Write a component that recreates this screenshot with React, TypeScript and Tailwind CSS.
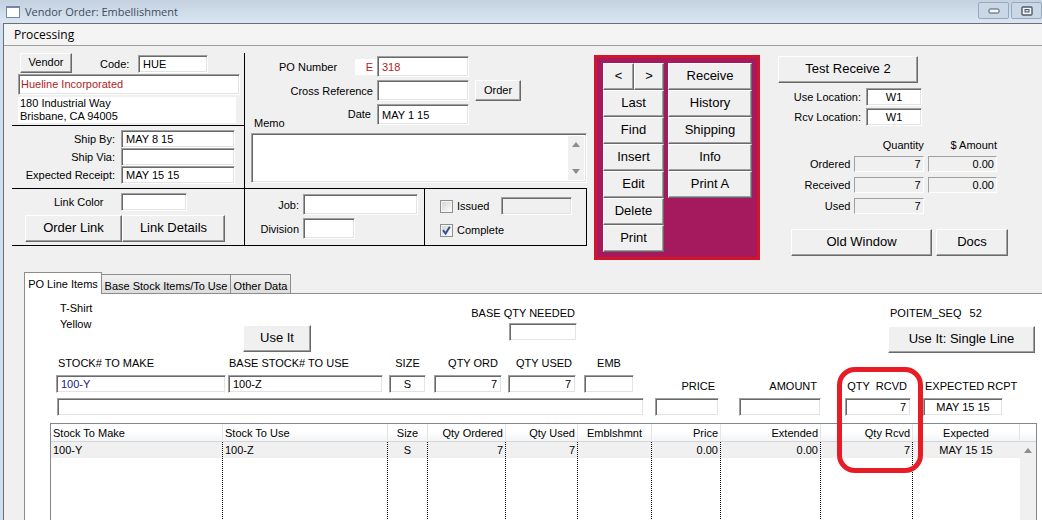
import React from "react";

const SUNKEN =
  "border border-t-[#a0a0a0] border-l-[#a0a0a0] border-r-white border-b-white bg-white px-1 text-[11px] outline-none shadow-[inset_1px_1px_0_#696969,inset_-1px_-1px_0_#e3e3e3]";
const FLAT =
  "h-4 border border-t-[#a0a0a0] border-l-[#a0a0a0] border-r-white border-b-white bg-[#f0f0f0] px-0.5 text-right text-[11px] outline-none";
const RAISED =
  "flex shrink-0 items-center justify-center border border-t-white border-l-white border-r-[#696969] border-b-[#696969] bg-[#f0f0f0] pb-0.5 whitespace-nowrap shadow-[inset_-1px_-1px_0_#a0a0a0]";
const DOTTED =
  "bg-[linear-gradient(to_bottom,#000_50%,transparent_50%)] bg-[length:1px_2px] bg-right-top bg-repeat-y nth-10:bg-none";

function Field({
  label,
  value = "",
  className = "",
  id,
}: {
  label?: string;
  value?: string;
  className?: string;
  id?: string;
}) {
  return (
    <input
      id={id}
      aria-label={id ? undefined : label}
      defaultValue={value}
      className={`${SUNKEN} ${className}`}
    />
  );
}

function Btn({ children, className = "" }: { children: React.ReactNode; className?: string }) {
  return (
    <button type="button" className={`${RAISED} ${className}`}>
      {children}
    </button>
  );
}

function Arrow({ down = false }: { down?: boolean }) {
  return (
    <svg width="8" height="5" viewBox="0 0 8 5" aria-hidden="true">
      <path d={down ? "M0 0H8L4 5Z" : "M0 5H8L4 0Z"} fill="#8c8c8c" />
    </svg>
  );
}

function VendorBlock() {
  return (
    <div className="flex w-[233px] flex-col border-r border-black">
      <div className="flex h-[73px] flex-col border-b border-black pr-1 pl-1.5">
        <div className="flex h-[21px] items-start">
          <Btn className="ml-0.5 h-5 w-[52px] text-[11px]">Vendor</Btn>
          <label htmlFor="code" className="ml-7 w-[38px] pt-1">
            Code:
          </label>
          <Field id="code" value="HUE" className="mt-0.5 h-[18px] w-[70px]" />
        </div>
        <Field label="Vendor name" value="Hueline Incorporated" className="h-[21px] w-full pb-0.5 pl-0.5 text-[#b01c24]" />
        <div className="mt-0.5 mr-1 bg-white pl-0.5 leading-[13px]">
          <p>180 Industrial Way</p>
          <p>Brisbane, CA 94005</p>
        </div>
      </div>
      <div className="grid grid-cols-[103px_114px] items-center gap-x-1.5 pt-1">
        <label htmlFor="shipby" className="text-right">Ship By:</label>
        <Field id="shipby" value="MAY 8 15" className="h-[18px]" />
        <label htmlFor="shipvia" className="text-right">Ship Via:</label>
        <Field id="shipvia" className="h-[18px]" />
        <label htmlFor="receipt" className="text-right">Expected Receipt:</label>
        <Field id="receipt" value="MAY 15 15" className="h-[18px]" />
      </div>
    </div>
  );
}

function OrderBlock() {
  return (
    <div className="flex w-[342px] flex-col pt-[3px]">
      <div className="flex flex-col gap-[3px]">
        <div className="flex h-[21px] items-center">
          <label htmlFor="po" className="w-[110px] pl-[34px]">PO Number</label>
          <span className="w-[22px] bg-white pr-1 text-right leading-4 text-[#b01c24]">E</span>
          <Field id="po" value="318" className="h-[21px] w-[92px] text-[#b01c24]" />
        </div>
        <div className="flex h-[21px] items-center">
          <label htmlFor="xref" className="w-[132px] pr-1 text-right">Cross Reference</label>
          <Field id="xref" className="h-[21px] w-[92px]" />
          <Btn className="ml-1.5 h-[21px] w-[46px] text-[11px]">Order</Btn>
        </div>
        <div className="flex h-[29px] items-start">
          <label htmlFor="memo" className="self-end pb-1 pl-[9px] leading-3">Memo</label>
          <label htmlFor="date" className="ml-auto pt-1 pr-1.5 leading-3">Date</label>
          <Field id="date" value="MAY 1 15" className="mr-[118px] h-[21px] w-[92px]" />
        </div>
      </div>
      <div className={`ml-1.5 flex h-[50px] ${SUNKEN} !p-[2px]`}>
        <textarea id="memo" className="min-w-0 flex-1 resize-none outline-none" />
        <div className="flex w-4 flex-col items-center justify-between bg-[#f0f0f0] py-1.5">
          <Arrow />
          <Arrow down />
        </div>
      </div>
    </div>
  );
}

function LinkRow() {
  return (
    <div className="flex h-[58px] border-y border-r border-black">
      <div className="w-[233px] border-r border-black pt-1">
        <div className="flex items-center">
          <label htmlFor="linkcolor" className="w-[109px] pl-[42px]">Link Color</label>
          <Field id="linkcolor" className="h-[18px] w-[66px]" />
        </div>
        <div className="mt-1 flex pl-[13px] text-[13px]">
          <Btn className="h-[27px] w-[97px]">Order Link</Btn>
          <Btn className="h-[27px] w-[103px]">Link Details</Btn>
        </div>
      </div>
      <div className="w-[180px] border-r border-black pt-[5px]">
        <div className="grid grid-cols-[54px_1fr] items-center gap-x-1 gap-y-[3px] pr-1.5">
          <label htmlFor="job" className="text-right">Job:</label>
          <Field id="job" className="h-[21px] w-full" />
          <label htmlFor="division" className="text-right">Division</label>
          <Field id="division" className="h-[21px] w-[52px]" />
        </div>
      </div>
      <div className="flex flex-col gap-1.5 pt-2 pl-[15px]">
        <div className="flex h-[18px] items-center">
          <Check label="Issued" />
          <input aria-label="Issued on" disabled className={`${SUNKEN} ml-auto h-[18px] w-[71px] !bg-[#f0f0f0]`} />
        </div>
        <div className="flex h-[18px] w-[132px] items-center">
          <Check label="Complete" checked />
        </div>
      </div>
    </div>
  );
}

function Check({ label, checked = false }: { label: string; checked?: boolean }) {
  return (
    <label className="flex items-center gap-1">
      <span className="grid size-[13px] place-items-center">
        <input
          type="checkbox"
          defaultChecked={checked}
          className="peer col-start-1 row-start-1 size-[13px] appearance-none border border-[#8e8f8f] bg-linear-to-br from-[#cfd3d8] to-white shadow-[inset_0_0_0_1px_#f4f4f4]"
        />
        <svg
          viewBox="0 0 13 13"
          className="pointer-events-none col-start-1 row-start-1 hidden size-[13px] peer-checked:block"
          aria-hidden="true"
        >
          <path d="M3 6.2L5.6 9.6L9.8 2.8" fill="none" stroke="#34508c" strokeWidth="2" />
        </svg>
      </span>
      {label}
    </label>
  );
}

function ActionPanel() {
  return (
    <div className="ml-[7px] flex shrink-0 items-start gap-1 self-start border-[3px] border-[#d3152b] bg-[#a5195f] py-[5px] pr-[5px] pl-1.5 text-[13px]">
      <div className="flex w-[61px] flex-col">
        <div className="flex">
          <Btn className="h-[27px] w-[31px]">&lt;</Btn>
          <Btn className="h-[27px] w-[30px]">&gt;</Btn>
        </div>
        {["Last", "Find", "Insert", "Edit", "Delete", "Print"].map((t) => (
          <Btn key={t} className="h-[27px]">{t}</Btn>
        ))}
      </div>
      <div className="flex w-[84px] flex-col">
        {["Receive", "History", "Shipping", "Info", "Print A"].map((t) => (
          <Btn key={t} className="h-[27px]">{t}</Btn>
        ))}
      </div>
    </div>
  );
}

function Totals() {
  return (
    <div className="ml-[18px] flex flex-col pt-px">
      <Btn className="h-[27px] w-[140px] text-[13px]">Test Receive 2</Btn>
      <div className="mt-[5px] grid grid-cols-[83px_56px] items-center gap-x-[5px] gap-y-0.5">
        <label htmlFor="useloc" className="text-right">Use Location:</label>
        <Field id="useloc" value="W1" className="h-[18px] text-center" />
        <label htmlFor="rcvloc" className="text-right">Rcv Location:</label>
        <Field id="rcvloc" value="W1" className="h-[18px] text-center" />
      </div>
      <table className="mt-2.5 -ml-1 w-[227px] border-separate border-spacing-x-1 border-spacing-y-0">
        <thead>
          <tr className="h-[17px] text-right">
            <td className="w-[73px]" />
            <th className="w-[70px] font-normal">Quantity</th>
            <th className="w-[70px] font-normal">$ Amount</th>
          </tr>
        </thead>
        <tbody>
          {[
            ["Ordered", "7", "0.00"],
            ["Received", "7", "0.00"],
            ["Used", "7", ""],
          ].map(([name, qty, amount]) => (
            <tr key={name} className="h-[21px]">
              <th className="text-right font-normal">{name}</th>
              <td>
                <input readOnly aria-label={`${name} quantity`} value={qty} className={`${FLAT} block w-full`} />
              </td>
              <td>
                {amount && (
                  <input readOnly aria-label={`${name} amount`} value={amount} className={`${FLAT} block w-full`} />
                )}
              </td>
            </tr>
          ))}
        </tbody>
      </table>
      <div className="mt-[13px] flex gap-1 pl-[13px] text-[13px]">
        <Btn className="h-[27px] w-[141px]">Old Window</Btn>
        <Btn className="h-[27px] w-[72px]">Docs</Btn>
      </div>
    </div>
  );
}

function Column({
  label,
  value,
  className,
  labelClass = "",
  inputClass = "",
  children,
}: {
  label: string;
  value?: string;
  className: string;
  labelClass?: string;
  inputClass?: string;
  children?: React.ReactNode;
}) {
  return (
    <div className={`relative flex shrink-0 flex-col gap-1 ${className}`}>
      <label className="flex flex-col gap-1">
        <span className={`leading-4 whitespace-pre ${labelClass}`}>{label}</span>
        <Field value={value} label={label} className={`h-[18px] w-full ${inputClass}`} />
      </label>
      {children}
    </div>
  );
}

function LineForm() {
  return (
    <div className="flex items-end pl-[31px]">
      <div className="flex w-[588px] shrink-0 flex-col gap-[5px]">
        <div className="flex">
          <Column label="STOCK# TO MAKE" value="100-Y" className="w-[170px]" labelClass="pl-0.5" inputClass="text-[#1a1a7c]" />
          <Column label="BASE STOCK# TO USE" value="100-Z" className="ml-0.5 w-[155px]" labelClass="pl-px" />
          <Column label="SIZE" value="S" className="ml-1.5 w-[37px]" labelClass="text-center" inputClass="text-center" />
          <Column label="QTY ORD" value="7" className="ml-2 w-[68px]" labelClass="pr-1 text-right" inputClass="text-right" />
          <Column label="QTY USED" value="7" className="ml-1.5 w-[68px]" labelClass="pr-1 text-right" inputClass="text-right" />
          <Column label="EMB" className="ml-2 w-[50px]" labelClass="text-center" />
        </div>
        <Field label="Description" className="ml-px h-[18px]" />
      </div>
      <Column label="PRICE" className="ml-[11px] w-16" labelClass="pr-1 text-right" />
      <Column label="AMOUNT" className="ml-5 w-[82px]" labelClass="pr-1 text-right" />
      <Column label="QTY  RCVD" value="7" className="ml-6 w-[66px]" labelClass="pr-1 text-right" inputClass="text-right">
        <div className="pointer-events-none absolute -top-[11px] -left-2 z-10 h-[106px] w-[86px] rounded-[18px] border-5 border-[#e81c24]" />
      </Column>
      <Column label="EXPECTED RCPT" value="MAY 15 15" className="ml-3 w-[80px]" labelClass="pl-0.5" inputClass="text-center" />
    </div>
  );
}

const COLUMNS: { title: string; value: string; width: string; align: string }[] = [
  { title: "Stock To Make", value: "100-Y", width: "w-[172px]", align: "text-left" },
  { title: "Stock To Use", value: "100-Z", width: "w-[165px]", align: "text-left" },
  { title: "Size", value: "S", width: "w-[40px]", align: "text-center" },
  { title: "Qty Ordered", value: "7", width: "w-[78px]", align: "text-right" },
  { title: "Qty Used", value: "7", width: "w-[72px]", align: "text-right" },
  { title: "Emblshmnt", value: "", width: "w-[74px]", align: "text-center" },
  { title: "Price", value: "0.00", width: "w-[69px]", align: "text-right" },
  { title: "Extended", value: "0.00", width: "w-[100px]", align: "text-right" },
  { title: "Qty Rcvd", value: "7", width: "w-[92px]", align: "text-right" },
  { title: "Expected", value: "MAY 15 15", width: "w-auto", align: "text-center" },
];

function LineTable() {
  return (
    <div className="mt-[7px] mr-[5px] ml-[25px] border border-b-0 border-[#828790]">
      <table className="w-full table-fixed border-separate border-spacing-0">
        <thead>
          <tr className="h-[18px] bg-linear-to-b from-white from-40% to-[#f1f3f5]">
            {COLUMNS.map((c) => (
              <th
                key={c.title}
                className={`border-r border-b border-r-[#e4e6e8] border-b-[#d5d5d5] px-0.5 font-normal ${c.width} ${c.align}`}
              >
                {c.title}
              </th>
            ))}
            <th className="w-4 border-b border-[#d5d5d5]" aria-label="Scroll" />
          </tr>
        </thead>
        <tbody>
          <tr className="h-4">
            {COLUMNS.map((c) => (
              <td key={c.title} className={`bg-[#f0f0f0] pr-[3px] pl-0.5 leading-4 ${DOTTED} ${c.align}`}>
                {c.value}
              </td>
            ))}
            <td rowSpan={2} className="bg-[#f0f0f0] pt-1.5 align-top">
              <div className="flex justify-center">
                <Arrow />
              </div>
            </td>
          </tr>
          <tr className="h-[62px]">
            {COLUMNS.map((c) => (
              <td key={c.title} className={DOTTED} />
            ))}
          </tr>
        </tbody>
      </table>
    </div>
  );
}

function TabPanel() {
  return (
    <div className="ml-5 flex flex-1 flex-col">
      <div role="tablist" className="flex items-end">
        <button role="tab" aria-selected="true" className="relative -mb-px h-[22px] w-[78px] border border-b-0 border-[#8c8c8c] bg-white pt-px">
          PO Line Items
        </button>
        <button role="tab" aria-selected="false" className="h-[19px] w-[129px] border border-b-0 border-l-0 border-[#8c8c8c] bg-linear-to-b from-[#f2f2f2] to-[#dcdcdc] pt-1 whitespace-nowrap">
          Base Stock Items/To Use
        </button>
        <button role="tab" aria-selected="false" className="h-[19px] w-[60px] border border-b-0 border-l-0 border-[#8c8c8c] bg-linear-to-b from-[#f2f2f2] to-[#dcdcdc] pt-1 whitespace-nowrap">
          Other Data
        </button>
      </div>
      <div className="flex-1 border-t border-l border-[#8c8c8c] bg-white">
        <div className="flex h-[61px] items-start pl-[35px]">
          <div className="w-[183px] pt-1.5 leading-4">
            <p>T-Shirt</p>
            <p>Yellow</p>
          </div>
          <Btn className="mt-[31px] h-[27px] w-[68px] text-[13px]">Use It</Btn>
          <label className="ml-[161px] flex w-[105px] flex-col items-end gap-[3px] pt-3">
            <span className="pr-0.5 whitespace-nowrap">BASE QTY NEEDED</span>
            <Field className="h-[18px] w-[68px]" />
          </label>
          <div className="mr-[7px] ml-auto w-[147px] pt-2.5">
            <p className="mb-1 flex gap-2 pl-0.5 leading-[18px]">
              <span>POITEM_SEQ</span>
              <span>52</span>
            </p>
            <Btn className="h-[27px] w-full text-[13px]">Use It: Single Line</Btn>
          </div>
        </div>
        <LineForm />
        <LineTable />
      </div>
    </div>
  );
}

export default function App() {
  return (
    <div className="flex min-h-screen flex-col overflow-hidden bg-[#cfdfee] font-['Liberation_Sans',Arial,sans-serif] text-[11px] leading-[14px] text-black">
      <header className="flex h-[23px] items-center bg-linear-to-b from-[#c3d1e0] to-[#dae6f3] pl-1.5">
        <span className="h-3 w-[14px] border border-t-2 border-[#7186a8] bg-white" />
        <h1 className="pl-[5px] font-['Open_Sans',sans-serif] text-[11px] text-[#3f4c5c]">Vendor Order: Embellishment</h1>
        <div className="ml-auto flex gap-0.5 self-start pt-0.5">
          <button aria-label="Minimize" className="grid h-[17px] w-[31px] place-items-center rounded-[2px] border border-[#98a9bd] bg-[#c9d7e6]">
            <svg width="12" height="6" viewBox="0 0 12 6" aria-hidden="true">
              <rect x="1" y="1" width="10" height="4" rx="1" fill="#f3f6fa" stroke="#535b66" />
            </svg>
          </button>
          <button aria-label="Maximize" className="grid h-[17px] w-[31px] place-items-center rounded-[2px] border border-[#98a9bd] bg-[#c9d7e6]">
            <svg width="12" height="10" viewBox="0 0 12 10" aria-hidden="true">
              <rect x="1" y="1" width="10" height="8" rx="1" fill="#f3f6fa" stroke="#535b66" strokeWidth="1.4" />
              <rect x="4" y="3.5" width="4" height="2.5" fill="#c9d7e6" stroke="#535b66" />
            </svg>
          </button>
        </div>
      </header>
      <main className="ml-[3px] flex flex-1 flex-col border-t border-l border-[#6b7078] bg-[#f0f0f0]">
        <nav className="flex h-[22px] items-center border-b border-[#a0a0a0] bg-[#f4f4f4] pl-2.5">
          <button className="font-['Open_Sans',sans-serif] text-[12px]">Processing</button>
        </nav>
        <div className="flex min-h-[226px] items-start pt-[7px] pl-2">
          <div className="flex shrink-0 flex-col">
            <div className="flex h-[135px]">
              <VendorBlock />
              <OrderBlock />
            </div>
            <LinkRow />
          </div>
          <div className="flex items-start pt-0.5">
            <ActionPanel />
            <Totals />
          </div>
        </div>
        <TabPanel />
      </main>
    </div>
  );
}
